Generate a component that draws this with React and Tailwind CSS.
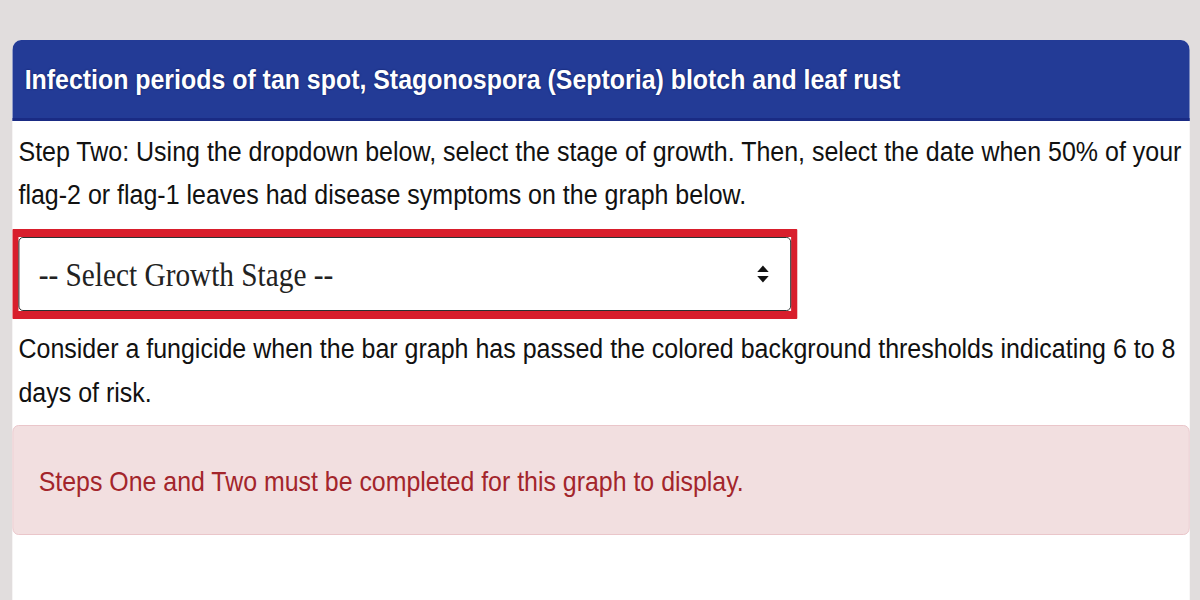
export default function App() {
  return (
    <div className="w-[1200px] h-[600px] overflow-hidden bg-[#e1dddd] font-['Liberation_Sans',Arial,sans-serif]">
      <div className="w-[1364px] h-[600px] origin-top-left scale-x-[0.88] pt-[40px] pl-[14px] pr-[12px]">
        <div className="bg-white rounded-t-[10px] h-[560px] overflow-hidden">
          <div className="h-[81px] bg-[#233b96] border-b-[3px] border-[#1a2b84] flex items-center pl-[14px] pt-[1px]">
            <h1 className="text-white font-bold text-[28.3px] leading-none [text-shadow:0_0_2px_#0a1758]">
              Infection periods of tan spot, Stagonospora (Septoria) blotch and leaf rust
            </h1>
          </div>
          <div className="pt-[9px]">
            <p className="text-[#111] text-[28.4px] leading-[43px] pl-[7px] pr-[4px]">
              Step Two: Using the dropdown below, select the stage of growth. Then, select the date when 50% of your flag-2 or flag-1 leaves had disease symptoms on the graph below.
            </p>
            <div className="mt-[13px] w-[892px] border-x-[7px] border-y-[8px] border-[#d81e2c] rounded-[1px]">
              <div className="h-[74px] border border-[#1c2424] rounded-[5px] bg-white flex items-center justify-between pl-[22px] pr-[24px]">
                <span className="text-[33.3px] text-[#222] pt-[2px] font-['Liberation_Serif','Times_New_Roman',serif]">-- Select Growth Stage --</span>
                <svg width="14" height="18" viewBox="0 0 14 18" className="block">
                  <path d="M7 0.5 L13.5 7 L0.5 7 Z" fill="#111" />
                  <path d="M0.5 11 L13.5 11 L7 17.5 Z" fill="#111" />
                </svg>
              </div>
            </div>
            <p className="mt-[7px] text-[#111] text-[28.4px] leading-[44px] pl-[7px] pr-[4px]">
              Consider a fungicide when the bar graph has passed the colored background thresholds indicating 6 to 8 days of risk.
            </p>
            <div className="mt-[11px] h-[110px] bg-[#f2dfe0] border border-[#e9c3c7] rounded-[7px] flex items-center pl-[29px]">
              <span className="text-[#a3252b] text-[28.3px] pt-[2px]">Steps One and Two must be completed for this graph to display.</span>
            </div>
          </div>
        </div>
      </div>
    </div>
  );
}
